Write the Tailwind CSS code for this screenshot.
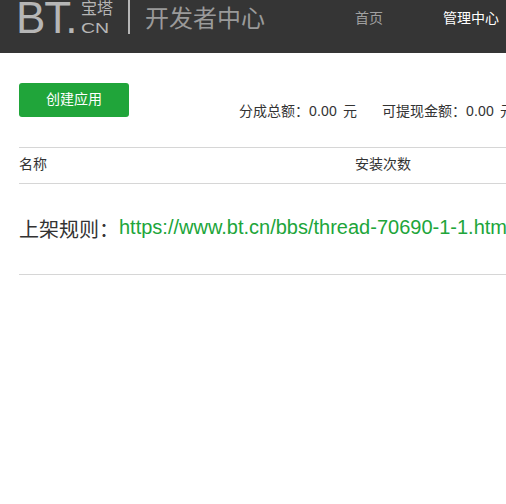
<!DOCTYPE html>
<html lang="zh">
<head>
<meta charset="utf-8">
<script src="https://cdn.jsdelivr.net/npm/@tailwindcss/browser@4"></script>
</head>
<body class="bg-white overflow-hidden font-['Liberation_Sans','Noto_Sans_CJK_SC',sans-serif]">
<div class="w-[506px] h-[504px] overflow-hidden">
  <header class="h-[53px] bg-[#353535] flex items-start pl-[19px] overflow-hidden">
    <div class="flex items-start h-[34px] shrink-0">
      <span class="text-[#b6b6b6] text-[44px] leading-[36px] w-[62px] -ml-[3px] mr-[3px] tracking-[-1px] whitespace-nowrap">BT.</span>
      <div class="flex flex-col w-[33px] text-[#b6b6b6]">
        <span class="text-[16px] leading-[16px] h-[21px] mt-px">宝塔</span>
        <span class="text-[15px] leading-[12px] inline-block origin-left scale-x-[1.3] whitespace-nowrap">CN</span>
      </div>
      <div class="w-[2px] h-[34px] bg-[#b6b6b6] ml-[14px] mr-[15px]"></div>
      <span class="text-[#9a9a9a] text-[24px] leading-[38px] w-[120px] whitespace-nowrap">开发者中心</span>
    </div>
    <nav class="flex text-sm leading-[36px] whitespace-nowrap ml-[90px]">
      <a class="text-[#a0a0a0] w-[88px]">首页</a>
      <a class="text-white">管理中心</a>
    </nav>
  </header>
  <main class="pl-[19px] w-[700px]">
    <div class="h-[94px] pt-[30px] flex items-start">
      <button class="w-[110px] h-[34px] bg-[#20a53a] text-white text-sm rounded-[3px] text-center pb-[2px]">创建应用</button>
      <div class="flex text-sm text-[#333333] mt-[18px] ml-[110px] leading-[20px] whitespace-nowrap">
        <span class="mr-[25px] [word-spacing:2px]">分成总额：<span class="tracking-[0.2px]">0.00</span> 元</span>
        <span class="[word-spacing:2px]">可提现金额：<span class="tracking-[0.2px]">0.00</span> 元</span>
      </div>
    </div>
    <div class="w-[487px] h-[37px] border-y border-[#d6d6d6] flex items-center text-sm text-[#333333] pb-[4px]">
      <span class="w-[336px]">名称</span>
      <span>安装次数</span>
    </div>
    <div class="w-[487px] h-[91px] border-b border-[#d6d6d6] flex items-start pt-[30px] whitespace-nowrap text-[20px] leading-[28px]">
      <span class="text-[#333333] w-[100px] shrink-0 mt-[2px]">上架规则：</span>
      <a class="text-[#20a53a] text-[20px] leading-[26px]">https://www.bt.cn/bbs/thread-70690-1-1.html</a>
    </div>
  </main>
</div>
</body>
</html>
